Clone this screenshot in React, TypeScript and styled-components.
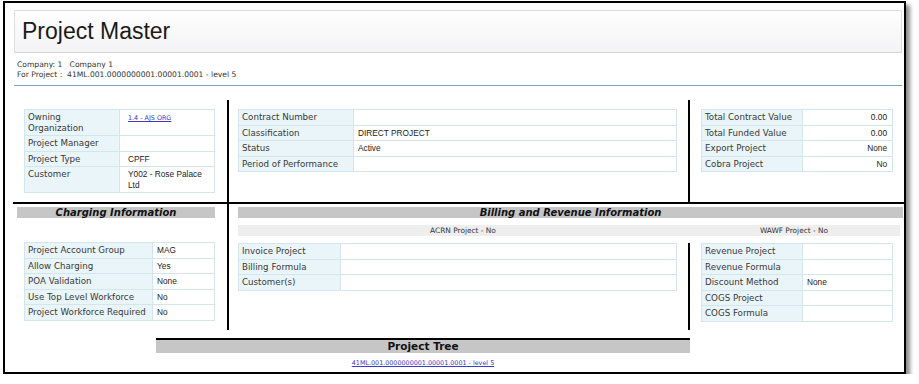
import React from "react";
import styled, { createGlobalStyle } from "styled-components";

const Global = createGlobalStyle`
  html, body { margin: 0; padding: 0; background: #ffffff; }
  body { font-family: "DejaVu Sans", Verdana, sans-serif; }
`;

const Frame = styled.div`
  box-sizing: border-box;
  margin: 1px 0 0 3px;
  width: 903px;
  height: 373px;
  border: 2px solid #000;
  background: #fff;
  box-shadow: 4px 4px 4px rgba(0, 0, 0, 0.45);
  display: flex;
  flex-direction: column;
  padding-top: 7px;
`;

const Header = styled.div`
  box-sizing: border-box;
  margin: 0 2px 0 9px;
  height: 43px;
  border: 1px solid #dedde0;
  border-bottom-color: #d4d3d7;
  background: linear-gradient(#fefefe, #f4f3f5);
  display: flex;
  align-items: center;
  padding-left: 7px;
`;

const Title = styled.h1`
  margin: 0;
  font-family: "Liberation Sans", Arial, sans-serif;
  font-weight: normal;
  font-size: 23px;
  color: #1a1a1a;
`;

const Info = styled.div`
  margin: 7px 2px 0 9px;
  padding: 0 0 5px 3px;
  border-bottom: 1px solid #7ba4c6;
  font-family: "DejaVu Sans", Verdana, sans-serif;
  font-size: 7.6px;
  line-height: 10px;
  color: #333;
  white-space: pre;
`;

const Row = styled.div<{ $top?: boolean }>`
  display: flex;
  margin-left: 8px;
  ${(p) => (p.$top ? "border-bottom: 2px solid #000; height: 102px; margin-top: 14px;" : "height: 126px;")}
`;

const Cell = styled.div<{ $w: number; $line?: boolean; $pad?: number }>`
  box-sizing: border-box;
  width: ${(p) => p.$w}px;
  flex: none;
  padding-left: ${(p) => p.$pad ?? 11}px;
  padding-top: 9px;
  ${(p) => (p.$line ? "border-right: 2px solid #000;" : "")}
`;

const LowerLeft = styled.div`
  box-sizing: border-box;
  width: 216px;
  flex: none;
  border-right: 2px solid #000;
  padding-top: 3px;
  display: flex;
  flex-direction: column;
`;

const LowerRight = styled.div`
  flex: 1;
  padding-top: 3px;
  display: flex;
  flex-direction: column;
`;

const SectionBar = styled.div<{ $ml: number; $mr: number }>`
  margin: 0 ${(p) => p.$mr}px 0 ${(p) => p.$ml}px;
  height: 11px;
  background: #c6c6c6;
  font-family: "DejaVu Sans", Verdana, sans-serif;
  font-weight: bold;
  font-style: italic;
  font-size: 10px;
  line-height: 11px;
  color: #111;
  text-align: center;
  white-space: nowrap;
`;

const SubBar = styled.div`
  display: flex;
  margin: 7px 4px 0 9px;
  height: 11px;
  background: #eeeeee;
`;

const SubItem = styled.div<{ $w: number }>`
  width: ${(p) => p.$w}px;
  flex: none;
  text-align: center;
  font-family: "DejaVu Sans", Verdana, sans-serif;
  font-size: 7.4px;
  line-height: 11px;
  color: #333;
`;

const TablesRow = styled.div`
  display: flex;
  margin-top: 7px;
  flex: 1;
`;

const LowerCell = styled.div<{ $w: number; $line?: boolean; $pad: number; $mt?: number }>`
  box-sizing: border-box;
  width: ${(p) => p.$w}px;
  flex: none;
  padding-left: ${(p) => p.$pad}px;
  margin-top: ${(p) => p.$mt ?? 0}px;
  ${(p) => (p.$line ? "border-right: 2px solid #000;" : "")}
`;

const Table = styled.table<{ $w: number; $lw: number; $valuePad?: number; $right?: boolean }>`
  width: ${(p) => p.$w}px;
  border-collapse: collapse;
  table-layout: fixed;
  td {
    border: 1px solid #d3e5ed;
    padding: 2px 4px 2px 4px;
    line-height: 10.5px;
    vertical-align: top;
    white-space: nowrap;
    overflow: hidden;
  }
  td:first-child {
    width: ${(p) => p.$lw}px;
    box-sizing: border-box;
    background: #eaf5f9;
    font-family: "DejaVu Sans", Verdana, sans-serif;
    font-size: 8.7px;
    color: #383838;
    padding-left: 3px;
    padding-right: 1px;
  }
  td:last-child {
    background: #fff;
    font-family: "Liberation Sans", Arial, sans-serif;
    font-size: 8.3px;
    color: #222;
    padding-left: ${(p) => p.$valuePad ?? 4}px;
    padding-right: 5px;
    text-align: ${(p) => (p.$right ? "right" : "left")};
  }
`;

const TinyLink = styled.a`
  font-family: "DejaVu Sans", Verdana, sans-serif;
  font-size: 6.4px;
  color: #3a3acc;
  text-decoration: underline;
`;

const Tree = styled.div`
  margin: 8px 0 0 151px;
  width: 534px;
  border-top: 2px solid #000;
`;

const TreeBar = styled.div`
  height: 13px;
  background: #c6c6c6;
  font-family: "DejaVu Sans", Verdana, sans-serif;
  font-weight: bold;
  font-size: 10.5px;
  line-height: 13px;
  text-align: center;
  color: #111;
`;

const TreeLink = styled.div`
  text-align: center;
  line-height: 12px;
  margin-top: 1px;
`;

type Pair = [React.ReactNode, React.ReactNode];

const KV = ({
  rows,
  w,
  lw,
  valuePad,
  right,
}: {
  rows: Pair[];
  w: number;
  lw: number;
  valuePad?: number;
  right?: boolean;
}) => (
  <Table $w={w} $lw={lw} $valuePad={valuePad} $right={right}>
    <tbody>
      {rows.map((r, i) => (
        <tr key={i}>
          <td>{r[0]}</td>
          <td>{r[1]}</td>
        </tr>
      ))}
    </tbody>
  </Table>
);

export default function App() {
  return (
    <>
      <Global />
      <Frame>
        <Header>
          <Title>Project Master</Title>
        </Header>
        <Info>
          {"Company: 1   Company 1\nFor Project :  41ML.001.0000000001.00001.0001 - level 5"}
        </Info>
        <Row $top>
          <Cell $w={216} $line>
            <KV
              w={191}
              lw={95}
              valuePad={8}
              rows={[
                [
                  <>
                    Owning
                    <br />
                    Organization
                  </>,
                  <TinyLink href="#">1.4 - AJS ORG</TinyLink>,
                ],
                ["Project Manager", ""],
                ["Project Type", "CPFF"],
                [
                  "Customer",
                  <>
                    Y002 - Rose Palace
                    <br />
                    Ltd
                  </>,
                ],
              ]}
            />
          </Cell>
          <Cell $w={461} $line $pad={9}>
            <KV
              w={439}
              lw={115}
              rows={[
                ["Contract Number", ""],
                ["Classification", "DIRECT PROJECT"],
                ["Status", "Active"],
                ["Period of Performance", ""],
              ]}
            />
          </Cell>
          <Cell $w={214}>
            <KV
              w={192}
              lw={101}
              right
              rows={[
                ["Total Contract Value", "0.00"],
                ["Total Funded Value", "0.00"],
                ["Export Project", "None"],
                ["Cobra Project", "No"],
              ]}
            />
          </Cell>
        </Row>
        <Row>
          <LowerLeft>
            <SectionBar $ml={4} $mr={12}>
              Charging Information
            </SectionBar>
            <LowerCell $w={214} $pad={11} $mt={24}>
              <KV
                w={191}
                lw={128}
                rows={[
                  ["Project Account Group", "MAG"],
                  ["Allow Charging", "Yes"],
                  ["POA Validation", "None"],
                  ["Use Top Level Workforce", "No"],
                  ["Project Workforce Required", "No"],
                ]}
              />
            </LowerCell>
          </LowerLeft>
          <LowerRight>
            <SectionBar $ml={9} $mr={1}>
              Billing and Revenue Information
            </SectionBar>
            <SubBar>
              <SubItem $w={450}>ACRN Project - No</SubItem>
              <SubItem $w={212}>WAWF Project - No</SubItem>
            </SubBar>
            <TablesRow>
              <LowerCell $w={461} $line $pad={9}>
                <KV
                  w={439}
                  lw={102}
                  rows={[
                    ["Invoice Project", ""],
                    ["Billing Formula", ""],
                    ["Customer(s)", ""],
                  ]}
                />
              </LowerCell>
              <LowerCell $w={214} $pad={11}>
                <KV
                  w={192}
                  lw={101}
                  rows={[
                    ["Revenue Project", ""],
                    ["Revenue Formula", ""],
                    ["Discount Method", "None"],
                    ["COGS Project", ""],
                    ["COGS Formula", ""],
                  ]}
                />
              </LowerCell>
            </TablesRow>
          </LowerRight>
        </Row>
        <Tree>
          <TreeBar>Project Tree</TreeBar>
          <TreeLink>
            <TinyLink href="#">41ML.001.0000000001.00001.0001 - level 5</TinyLink>
          </TreeLink>
        </Tree>
      </Frame>
    </>
  );
}
